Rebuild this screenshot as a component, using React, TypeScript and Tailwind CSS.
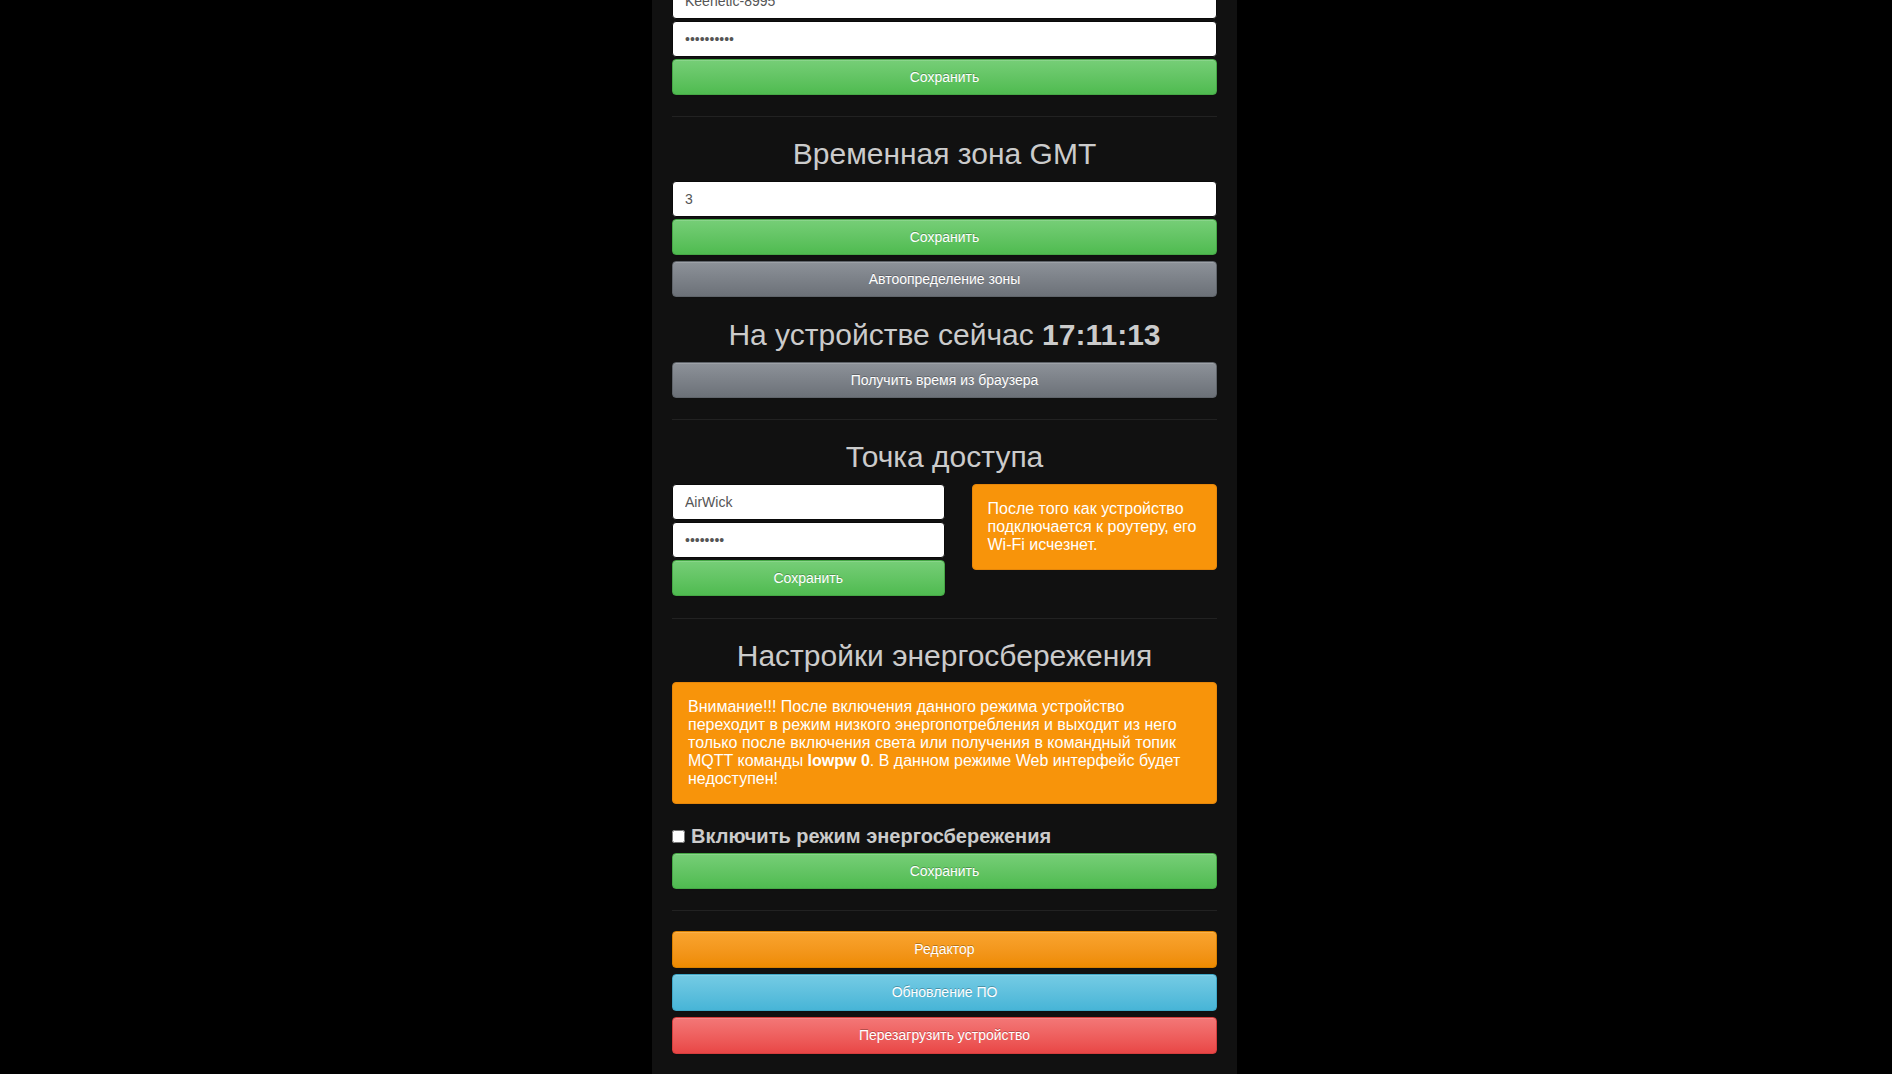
import React, { useState } from "react";

const font = { fontFamily: '"Liberation Sans", Arial, sans-serif' };

type Tone = "green" | "grey" | "orange" | "blue" | "red";

const tones: Record<Tone, string> = {
    green: "bg-linear-to-b from-[#76ce77] to-[#4fbb50] border-[#45a845]",
    grey: "bg-linear-to-b from-[#8d9299] to-[#6c7178] border-[#5f646a]",
    orange: "bg-linear-to-b from-[#f9a42e] to-[#ee8b00] border-[#d98000]",
    blue: "bg-linear-to-b from-[#74cbe4] to-[#47b5d7] border-[#3ea8c8]",
    red: "bg-linear-to-b from-[#f37777] to-[#e94646] border-[#d63d3d]",
};

function Btn({ tone, children, tall }: { tone: Tone; children: React.ReactNode; tall?: boolean }) {
    return (
        <button
            className={`w-full ${tall ? "h-[37px]" : "h-[36px]"} rounded-[4px] border text-[14px] text-white [text-shadow:0_-1px_0_rgba(0,0,0,0.25)] shadow-[inset_0_1px_0_rgba(255,255,255,0.15),0_1px_1px_rgba(0,0,0,0.075)] ${tones[tone]}`}
        >
            {children}
        </button>
    );
}

function Field({ value, password }: { value: string; password?: boolean }) {
    return (
        <input
            type={password ? "password" : "text"}
            defaultValue={value}
            className="block w-full h-[36px] px-[12px] rounded-[4px] border border-[#0a0a0a] bg-white text-[14px] text-[#555] outline-none"
        />
    );
}

function Heading({ children }: { children: React.ReactNode }) {
    return <h2 className="mt-[20px] h-[33px] leading-[33px] text-center text-[30px] font-normal text-[#cbcbcb]">{children}</h2>;
}

function Divider() {
    return <div className="mt-[21px] h-px bg-[#222]" />;
}

export default function App() {
    const [lowPower, setLowPower] = useState(false);

    return (
        <div className="h-screen overflow-hidden bg-black flex justify-center pr-[3px]" style={font}>
            <div className="w-[585px] bg-[#111] px-[20px]">
                {/* Wi-Fi client (cut off at the top) */}
                <div className="-mt-[17px] flex flex-col gap-[2px]">
                    <Field value="Keenetic-8995" />
                    <Field value="1234567890" password />
                    <Btn tone="green">Сохранить</Btn>
                </div>

                <Divider />

                {/* Time zone */}
                <Heading>Временная зона GMT</Heading>
                <div className="mt-[11px] flex flex-col gap-[2px]">
                    <Field value="3" />
                    <Btn tone="green">Сохранить</Btn>
                </div>
                <div className="mt-[6px]">
                    <Btn tone="grey">Автоопределение зоны</Btn>
                </div>

                <h2 className="mt-[21px] h-[33px] leading-[33px] text-center text-[30px] font-normal text-[#cbcbcb]">
                    На устройстве сейчас <b className="font-bold">17:11:13</b>
                </h2>
                <div className="mt-[11px]">
                    <Btn tone="grey">Получить время из браузера</Btn>
                </div>

                <Divider />

                {/* Access point */}
                <Heading>Точка доступа</Heading>
                <div className="mt-[11px] flex items-start">
                    <div className="w-1/2 flex flex-col gap-[2px]">
                        <Field value="AirWick" />
                        <Field value="12345678" password />
                        <Btn tone="green">Сохранить</Btn>
                    </div>
                    <div className="flex-1 pl-[27px]">
                        <div className="rounded-[4px] border border-[#e5860a] bg-[#f8940a] p-[15px] text-[16px] leading-[18px] text-white">
                            После того как устройство подключается к роутеру, его Wi-Fi исчезнет.
                        </div>
                    </div>
                </div>

                <div className="mt-[22px] h-px bg-[#222]" />

                {/* Power saving */}
                <Heading>Настройки энергосбережения</Heading>
                <div className="mt-[10px] rounded-[4px] border border-[#e5860a] bg-[#f8940a] p-[15px] text-[16px] leading-[18px] text-white">
                    Внимание!!! После включения данного режима устройство переходит в режим низкого энергопотребления и выходит из
                    него только после включения света или получения в командный топик MQTT команды <b>lowpw 0</b>. В данном
                    режиме Web интерфейс будет недоступен!
                </div>

                <label className="mt-[20px] h-[24px] flex items-center text-[20px] font-bold text-[#cbcbcb]">
                    <input
                        type="checkbox"
                        checked={lowPower}
                        onChange={() => setLowPower(!lowPower)}
                        className="mr-[6px] w-[13px] h-[13px]"
                    />
                    Включить режим энергосбережения
                </label>
                <div className="mt-[5px]">
                    <Btn tone="green">Сохранить</Btn>
                </div>

                <Divider />

                <div className="mt-[20px] flex flex-col gap-[6px]">
                    <Btn tone="orange" tall>Редактор</Btn>
                    <Btn tone="blue" tall>Обновление ПО</Btn>
                    <Btn tone="red" tall>Перезагрузить устройство</Btn>
                </div>
            </div>
        </div>
    );
}
